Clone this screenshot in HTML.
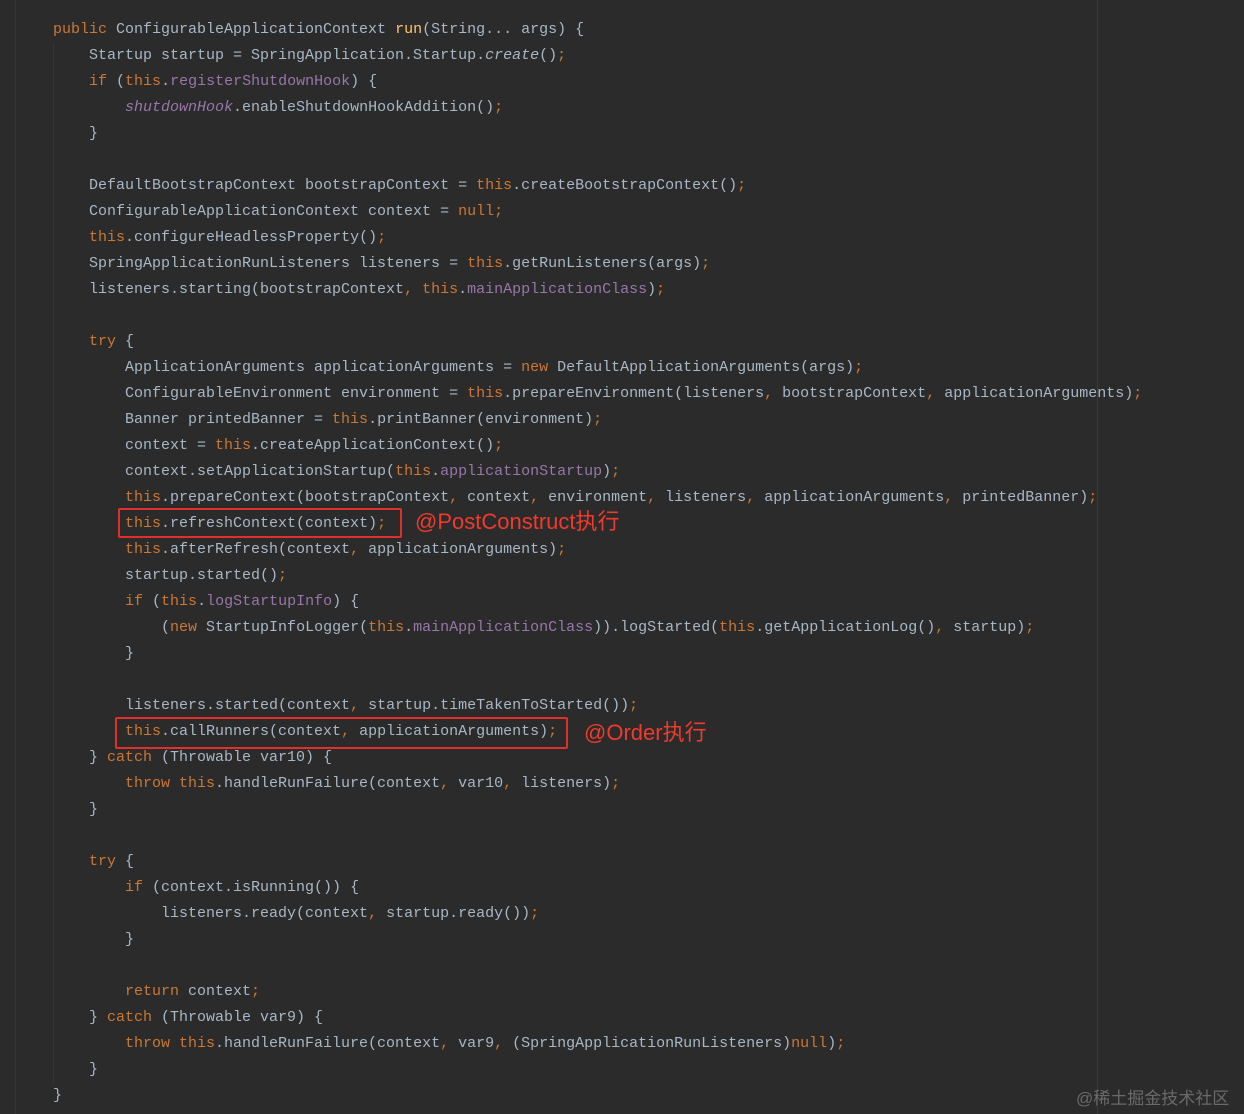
<!DOCTYPE html>
<html><head><meta charset="utf-8"><style>
html,body{margin:0;padding:0;background:#2b2b2b;}
body{width:1244px;height:1114px;position:relative;overflow:hidden;}
.g{position:absolute;top:0;bottom:0;width:1px;background:#353535;}
.code{position:absolute;left:53px;top:17px;margin:0;font-family:"Liberation Mono",monospace;font-size:15px;line-height:26px;color:#a9b7c6;white-space:pre;}
.k{color:#cc7832}.f{color:#9876aa}.i{font-style:italic}.m{color:#ffc66d}
.box{position:absolute;border:2px solid #e0302c;border-radius:2px;}
.lbl{position:absolute;color:#f03a2e;font-family:"Liberation Sans","Noto Sans CJK SC",sans-serif;font-size:22px;line-height:26px;}
.wm{position:absolute;left:1076px;top:1084px;color:#6a6a6a;font-family:"Liberation Sans","Noto Sans CJK SC",sans-serif;font-size:17px;}
</style></head><body>
<div class="g" style="left:15px"></div>
<div class="g" style="left:53px;top:42px;bottom:30px"></div>
<div class="g" style="left:1097px;background:#3a3a3a"></div>
<pre class="code"><span class="k">public</span> ConfigurableApplicationContext <span class="m">run</span>(String... args) {
    Startup startup = SpringApplication.Startup.<span class="i">create</span>()<span class="k">;</span>
    <span class="k">if</span> (<span class="k">this</span>.<span class="f">registerShutdownHook</span>) {
        <span class="f i">shutdownHook</span>.enableShutdownHookAddition()<span class="k">;</span>
    }

    DefaultBootstrapContext bootstrapContext = <span class="k">this</span>.createBootstrapContext()<span class="k">;</span>
    ConfigurableApplicationContext context = <span class="k">null;</span>
    <span class="k">this</span>.configureHeadlessProperty()<span class="k">;</span>
    SpringApplicationRunListeners listeners = <span class="k">this</span>.getRunListeners(args)<span class="k">;</span>
    listeners.starting(bootstrapContext<span class="k">, this</span>.<span class="f">mainApplicationClass</span>)<span class="k">;</span>

    <span class="k">try</span> {
        ApplicationArguments applicationArguments = <span class="k">new</span> DefaultApplicationArguments(args)<span class="k">;</span>
        ConfigurableEnvironment environment = <span class="k">this</span>.prepareEnvironment(listeners<span class="k">,</span> bootstrapContext<span class="k">,</span> applicationArguments)<span class="k">;</span>
        Banner printedBanner = <span class="k">this</span>.printBanner(environment)<span class="k">;</span>
        context = <span class="k">this</span>.createApplicationContext()<span class="k">;</span>
        context.setApplicationStartup(<span class="k">this</span>.<span class="f">applicationStartup</span>)<span class="k">;</span>
        <span class="k">this</span>.prepareContext(bootstrapContext<span class="k">,</span> context<span class="k">,</span> environment<span class="k">,</span> listeners<span class="k">,</span> applicationArguments<span class="k">,</span> printedBanner)<span class="k">;</span>
        <span class="k">this</span>.refreshContext(context)<span class="k">;</span>
        <span class="k">this</span>.afterRefresh(context<span class="k">,</span> applicationArguments)<span class="k">;</span>
        startup.started()<span class="k">;</span>
        <span class="k">if</span> (<span class="k">this</span>.<span class="f">logStartupInfo</span>) {
            (<span class="k">new</span> StartupInfoLogger(<span class="k">this</span>.<span class="f">mainApplicationClass</span>)).logStarted(<span class="k">this</span>.getApplicationLog()<span class="k">,</span> startup)<span class="k">;</span>
        }

        listeners.started(context<span class="k">,</span> startup.timeTakenToStarted())<span class="k">;</span>
        <span class="k">this</span>.callRunners(context<span class="k">,</span> applicationArguments)<span class="k">;</span>
    } <span class="k">catch</span> (Throwable var10) {
        <span class="k">throw this</span>.handleRunFailure(context<span class="k">,</span> var10<span class="k">,</span> listeners)<span class="k">;</span>
    }

    <span class="k">try</span> {
        <span class="k">if</span> (context.isRunning()) {
            listeners.ready(context<span class="k">,</span> startup.ready())<span class="k">;</span>
        }

        <span class="k">return</span> context<span class="k">;</span>
    } <span class="k">catch</span> (Throwable var9) {
        <span class="k">throw this</span>.handleRunFailure(context<span class="k">,</span> var9<span class="k">,</span> (SpringApplicationRunListeners)<span class="k">null</span>)<span class="k">;</span>
    }
}</pre>
<div class="box" style="left:118px;top:508px;width:280px;height:26px"></div>
<div class="lbl" style="left:415px;top:509px">@PostConstruct执行</div>
<div class="box" style="left:115px;top:717px;width:449px;height:28px"></div>
<div class="lbl" style="left:584px;top:720px">@Order执行</div>
<div class="wm">@稀土掘金技术社区</div>
</body></html>
